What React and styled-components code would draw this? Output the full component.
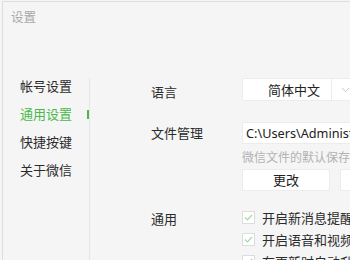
import React from "react";
import styled, { createGlobalStyle } from "styled-components";

const GlobalStyle = createGlobalStyle`
  html, body { margin: 0; padding: 0; background: #f5f5f5; overflow: hidden; }
  body { font-family: "Noto Sans CJK SC", "Noto Sans", sans-serif; color: #333; }
`;

const Window = styled.div`
  width: 348px;
  height: 259px;
  margin: 1px 0 0 2px;
  border-top: 1px solid #dedede;
  border-left: 1px solid #dedede;
  background: #f5f5f5;
  overflow: hidden;
  display: flex;
  flex-direction: column;
`;

const TitleBar = styled.div`
  height: 76px;
  flex: none;
  padding: 6px 0 0 8px;
  box-sizing: border-box;
  font-size: 12.5px;
  line-height: 18px;
  color: #a8a8a8;
`;

const Body = styled.div`
  flex: 1;
  display: flex;
  min-height: 0;
`;

const Nav = styled.nav`
  width: 86px;
  flex: none;
  border-right: 1px solid #e6e6e6;
  display: flex;
  flex-direction: column;
  gap: 14px;
  padding-top: 1px;
`;

const NavItem = styled.div`
  position: relative;
  padding-left: 17px;
  font-size: 13px;
  line-height: 14px;
  height: 14px;
  color: ${(p) => (p.$active ? "#4cb84c" : "#2b2b2b")};
  &::after {
    content: "";
    display: ${(p) => (p.$active ? "block" : "none")};
    position: absolute;
    right: 0;
    top: 3px;
    width: 2px;
    height: 9px;
    background: #4cb84c;
  }
`;

const Content = styled.div`
  flex: 1;
  padding-left: 61px;
  display: grid;
  grid-template-columns: 91px 1fr;
  grid-auto-rows: min-content;
  row-gap: 19px;
  align-content: start;
  overflow: hidden;
`;

const Label = styled.div`
  font-size: 13px;
  line-height: ${(p) => p.$lh || 23}px;
  color: #2b2b2b;
  white-space: nowrap;
  padding-top: ${(p) => p.$pt || 0}px;
`;

const Select = styled.div`
  display: flex;
  width: 140px;
  height: 23px;
  background: #fff;
  border: 1px solid #ececec;
  box-sizing: border-box;
`;

const SelectValue = styled.div`
  width: 89px;
  padding-left: 14px;
  box-sizing: border-box;
  text-align: center;
  font-size: 13px;
  line-height: 21px;
  color: #222;
  border-right: 1px solid #ececec;
`;

const SelectArrow = styled.div`
  flex: 1;
  display: flex;
  align-items: center;
  padding-left: 9px;
`;

const Stack = styled.div`
  display: flex;
  flex-direction: column;
`;

const PathInput = styled.div`
  width: 200px;
  height: 22px;
  background: #fff;
  border: 1px solid #ececec;
  box-sizing: border-box;
  padding-left: 3px;
  font-family: "Noto Sans", "Noto Sans CJK SC", sans-serif;
  font-size: 12.7px;
  line-height: 20px;
  color: #222;
  white-space: nowrap;
  overflow: hidden;
`;

const Hint = styled.div`
  margin-top: 5px;
  font-size: 12px;
  line-height: 16px;
  color: #b2b2b2;
  white-space: nowrap;
`;

const ButtonRow = styled.div`
  margin-top: 4px;
  display: flex;
  gap: 10px;
`;

const Button = styled.div`
  flex: none;
  width: 88px;
  height: 22px;
  background: #fff;
  border: 1px solid #ececec;
  box-sizing: border-box;
  text-align: center;
  font-size: 13px;
  line-height: 20px;
  color: #222;
`;

const CheckList = styled.div`
  display: flex;
  flex-direction: column;
  gap: 8px;
`;

const CheckRow = styled.label`
  display: flex;
  align-items: center;
  gap: 7px;
  height: 14px;
  font-size: 13px;
  white-space: nowrap;
  color: #2b2b2b;
`;

const Box = styled.span`
  flex: none;
  width: 13px;
  height: 13px;
  box-sizing: border-box;
  background: #fff;
  border: 1px solid #dcdcdc;
  display: flex;
  align-items: center;
  justify-content: center;
`;

const Check = () => (
  <svg width="9" height="7" viewBox="0 0 9 7">
    <path d="M1 3.5 L3.5 6 L8 1" fill="none" stroke="#a6d8a6" strokeWidth="1.2" />
  </svg>
);

const Chevron = () => (
  <svg width="9" height="6" viewBox="0 0 9 6">
    <path d="M1 1 L4.5 4.5 L8 1" fill="none" stroke="#c8c8c8" strokeWidth="1" />
  </svg>
);

export default function App() {
  return (
    <>
      <GlobalStyle />
      <Window>
        <TitleBar>设置</TitleBar>
        <Body>
          <Nav>
            <NavItem>帐号设置</NavItem>
            <NavItem $active>通用设置</NavItem>
            <NavItem>快捷按键</NavItem>
            <NavItem>关于微信</NavItem>
          </Nav>
          <Content>
            <Label $pt={2}>语言</Label>
            <Select>
              <SelectValue>简体中文</SelectValue>
              <SelectArrow>
                <Chevron />
              </SelectArrow>
            </Select>

            <Label $lh={22}>文件管理</Label>
            <Stack>
              <PathInput>C:\Users\Administrator\Documents\WeChat Files</PathInput>
              <Hint>微信文件的默认保存位置</Hint>
              <ButtonRow>
                <Button>更改</Button>
                <Button>打开文件夹</Button>
              </ButtonRow>
            </Stack>

            <Label $lh={16} $pt={1}>通用</Label>
            <CheckList>
              <CheckRow>
                <Box><Check /></Box>开启新消息提醒声音
              </CheckRow>
              <CheckRow>
                <Box><Check /></Box>开启语音和视频通话提醒声音
              </CheckRow>
              <CheckRow>
                <Box><Check /></Box>有更新时自动升级
              </CheckRow>
            </CheckList>
          </Content>
        </Body>
      </Window>
    </>
  );
}
